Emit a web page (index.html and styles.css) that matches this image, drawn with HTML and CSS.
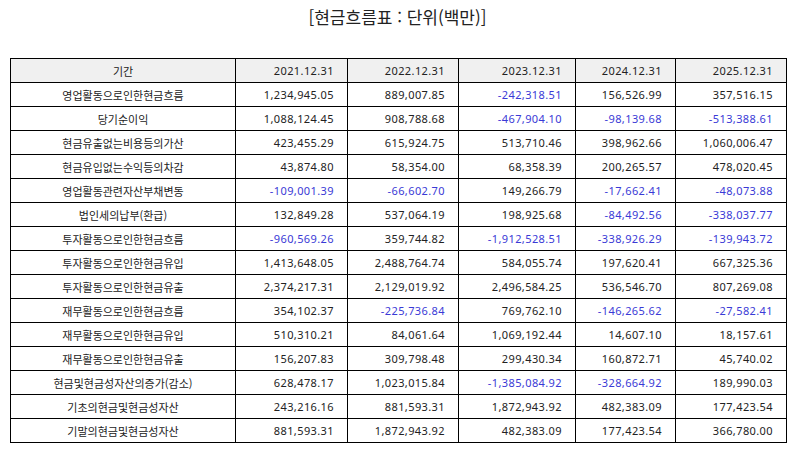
FILE: index.html
```html
<!DOCTYPE html>
<html lang="ko">
<head>
<meta charset="utf-8">
<title>현금흐름표</title>
<link rel="stylesheet" href="styles.css">
</head>
<body>
<h1 class="title">[현금흐름표 : 단위(백만)]</h1>
<table class="cf">
  <colgroup>
    <col class="c-label"><col class="c1"><col class="c2"><col class="c3"><col class="c4"><col class="c5">
  </colgroup>
  <thead>
    <tr><th class="label">기간</th><th>2021.12.31</th><th>2022.12.31</th><th>2023.12.31</th><th>2024.12.31</th><th>2025.12.31</th></tr>
  </thead>
  <tbody>
    <tr><td class="label">영업활동으로인한현금흐름</td><td>1,234,945.05</td><td>889,007.85</td><td class="neg">-242,318.51</td><td>156,526.99</td><td>357,516.15</td></tr>
    <tr><td class="label">당기순이익</td><td>1,088,124.45</td><td>908,788.68</td><td class="neg">-467,904.10</td><td class="neg">-98,139.68</td><td class="neg">-513,388.61</td></tr>
    <tr><td class="label">현금유출없는비용등의가산</td><td>423,455.29</td><td>615,924.75</td><td>513,710.46</td><td>398,962.66</td><td>1,060,006.47</td></tr>
    <tr><td class="label">현금유입없는수익등의차감</td><td>43,874.80</td><td>58,354.00</td><td>68,358.39</td><td>200,265.57</td><td>478,020.45</td></tr>
    <tr><td class="label">영업활동관련자산부채변동</td><td class="neg">-109,001.39</td><td class="neg">-66,602.70</td><td>149,266.79</td><td class="neg">-17,662.41</td><td class="neg">-48,073.88</td></tr>
    <tr><td class="label">법인세의납부(환급)</td><td>132,849.28</td><td>537,064.19</td><td>198,925.68</td><td class="neg">-84,492.56</td><td class="neg">-338,037.77</td></tr>
    <tr><td class="label">투자활동으로인한현금흐름</td><td class="neg">-960,569.26</td><td>359,744.82</td><td class="neg">-1,912,528.51</td><td class="neg">-338,926.29</td><td class="neg">-139,943.72</td></tr>
    <tr><td class="label">투자활동으로인한현금유입</td><td>1,413,648.05</td><td>2,488,764.74</td><td>584,055.74</td><td>197,620.41</td><td>667,325.36</td></tr>
    <tr><td class="label">투자활동으로인한현금유출</td><td>2,374,217.31</td><td>2,129,019.92</td><td>2,496,584.25</td><td>536,546.70</td><td>807,269.08</td></tr>
    <tr><td class="label">재무활동으로인한현금흐름</td><td>354,102.37</td><td class="neg">-225,736.84</td><td>769,762.10</td><td class="neg">-146,265.62</td><td class="neg">-27,582.41</td></tr>
    <tr><td class="label">재무활동으로인한현금유입</td><td>510,310.21</td><td>84,061.64</td><td>1,069,192.44</td><td>14,607.10</td><td>18,157.61</td></tr>
    <tr><td class="label">재무활동으로인한현금유출</td><td>156,207.83</td><td>309,798.48</td><td>299,430.34</td><td>160,872.71</td><td>45,740.02</td></tr>
    <tr><td class="label">현금및현금성자산의증가(감소)</td><td>628,478.17</td><td>1,023,015.84</td><td class="neg">-1,385,084.92</td><td class="neg">-328,664.92</td><td>189,990.03</td></tr>
    <tr><td class="label">기초의현금및현금성자산</td><td>243,216.16</td><td>881,593.31</td><td>1,872,943.92</td><td>482,383.09</td><td>177,423.54</td></tr>
    <tr><td class="label">기말의현금및현금성자산</td><td>881,593.31</td><td>1,872,943.92</td><td>482,383.09</td><td>177,423.54</td><td>366,780.00</td></tr>
  </tbody>
</table>
</body>
</html>
```

FILE: styles.css
```css
html, body {
  margin: 0;
  padding: 0;
  background: #ffffff;
}
body {
  font-family: "Noto Sans", "Noto Sans CJK KR", sans-serif;
  color: #222222;
}
.title {
  margin: 0;
  padding-top: 5px;
  height: 58px;
  box-sizing: border-box;
  text-align: center;
  font-family: "Noto Sans CJK KR", sans-serif;
  font-weight: 400;
  font-size: 17px;
  line-height: 23px;
  color: #222222;
}
.cf {
  margin-left: 10px;
  width: 776px;
  border-collapse: collapse;
  table-layout: fixed;
  font-size: 11px;
}
.c-label { width: 225px; }
.c1 { width: 112px; }
.c2 { width: 111px; }
.c3 { width: 117px; }
.c4 { width: 100px; }
.c5 { width: 111px; }
.cf th, .cf td {
  border: 1px solid #000000;
  height: 23px;
  padding: 0 13px 0 4px;
  text-align: right;
  font-weight: 400;
  line-height: 14px;
  letter-spacing: 0.4px;
  white-space: nowrap;
  font-family: "Noto Sans", "Noto Sans CJK KR", sans-serif;
}
.cf th {
  background: #f0f0f0;
}
.cf .label {
  text-align: center;
  padding: 0 4px;
  letter-spacing: 0;
  font-family: "Noto Sans CJK KR", sans-serif;
}
.cf .neg {
  color: #3a3ad6;
}
```
